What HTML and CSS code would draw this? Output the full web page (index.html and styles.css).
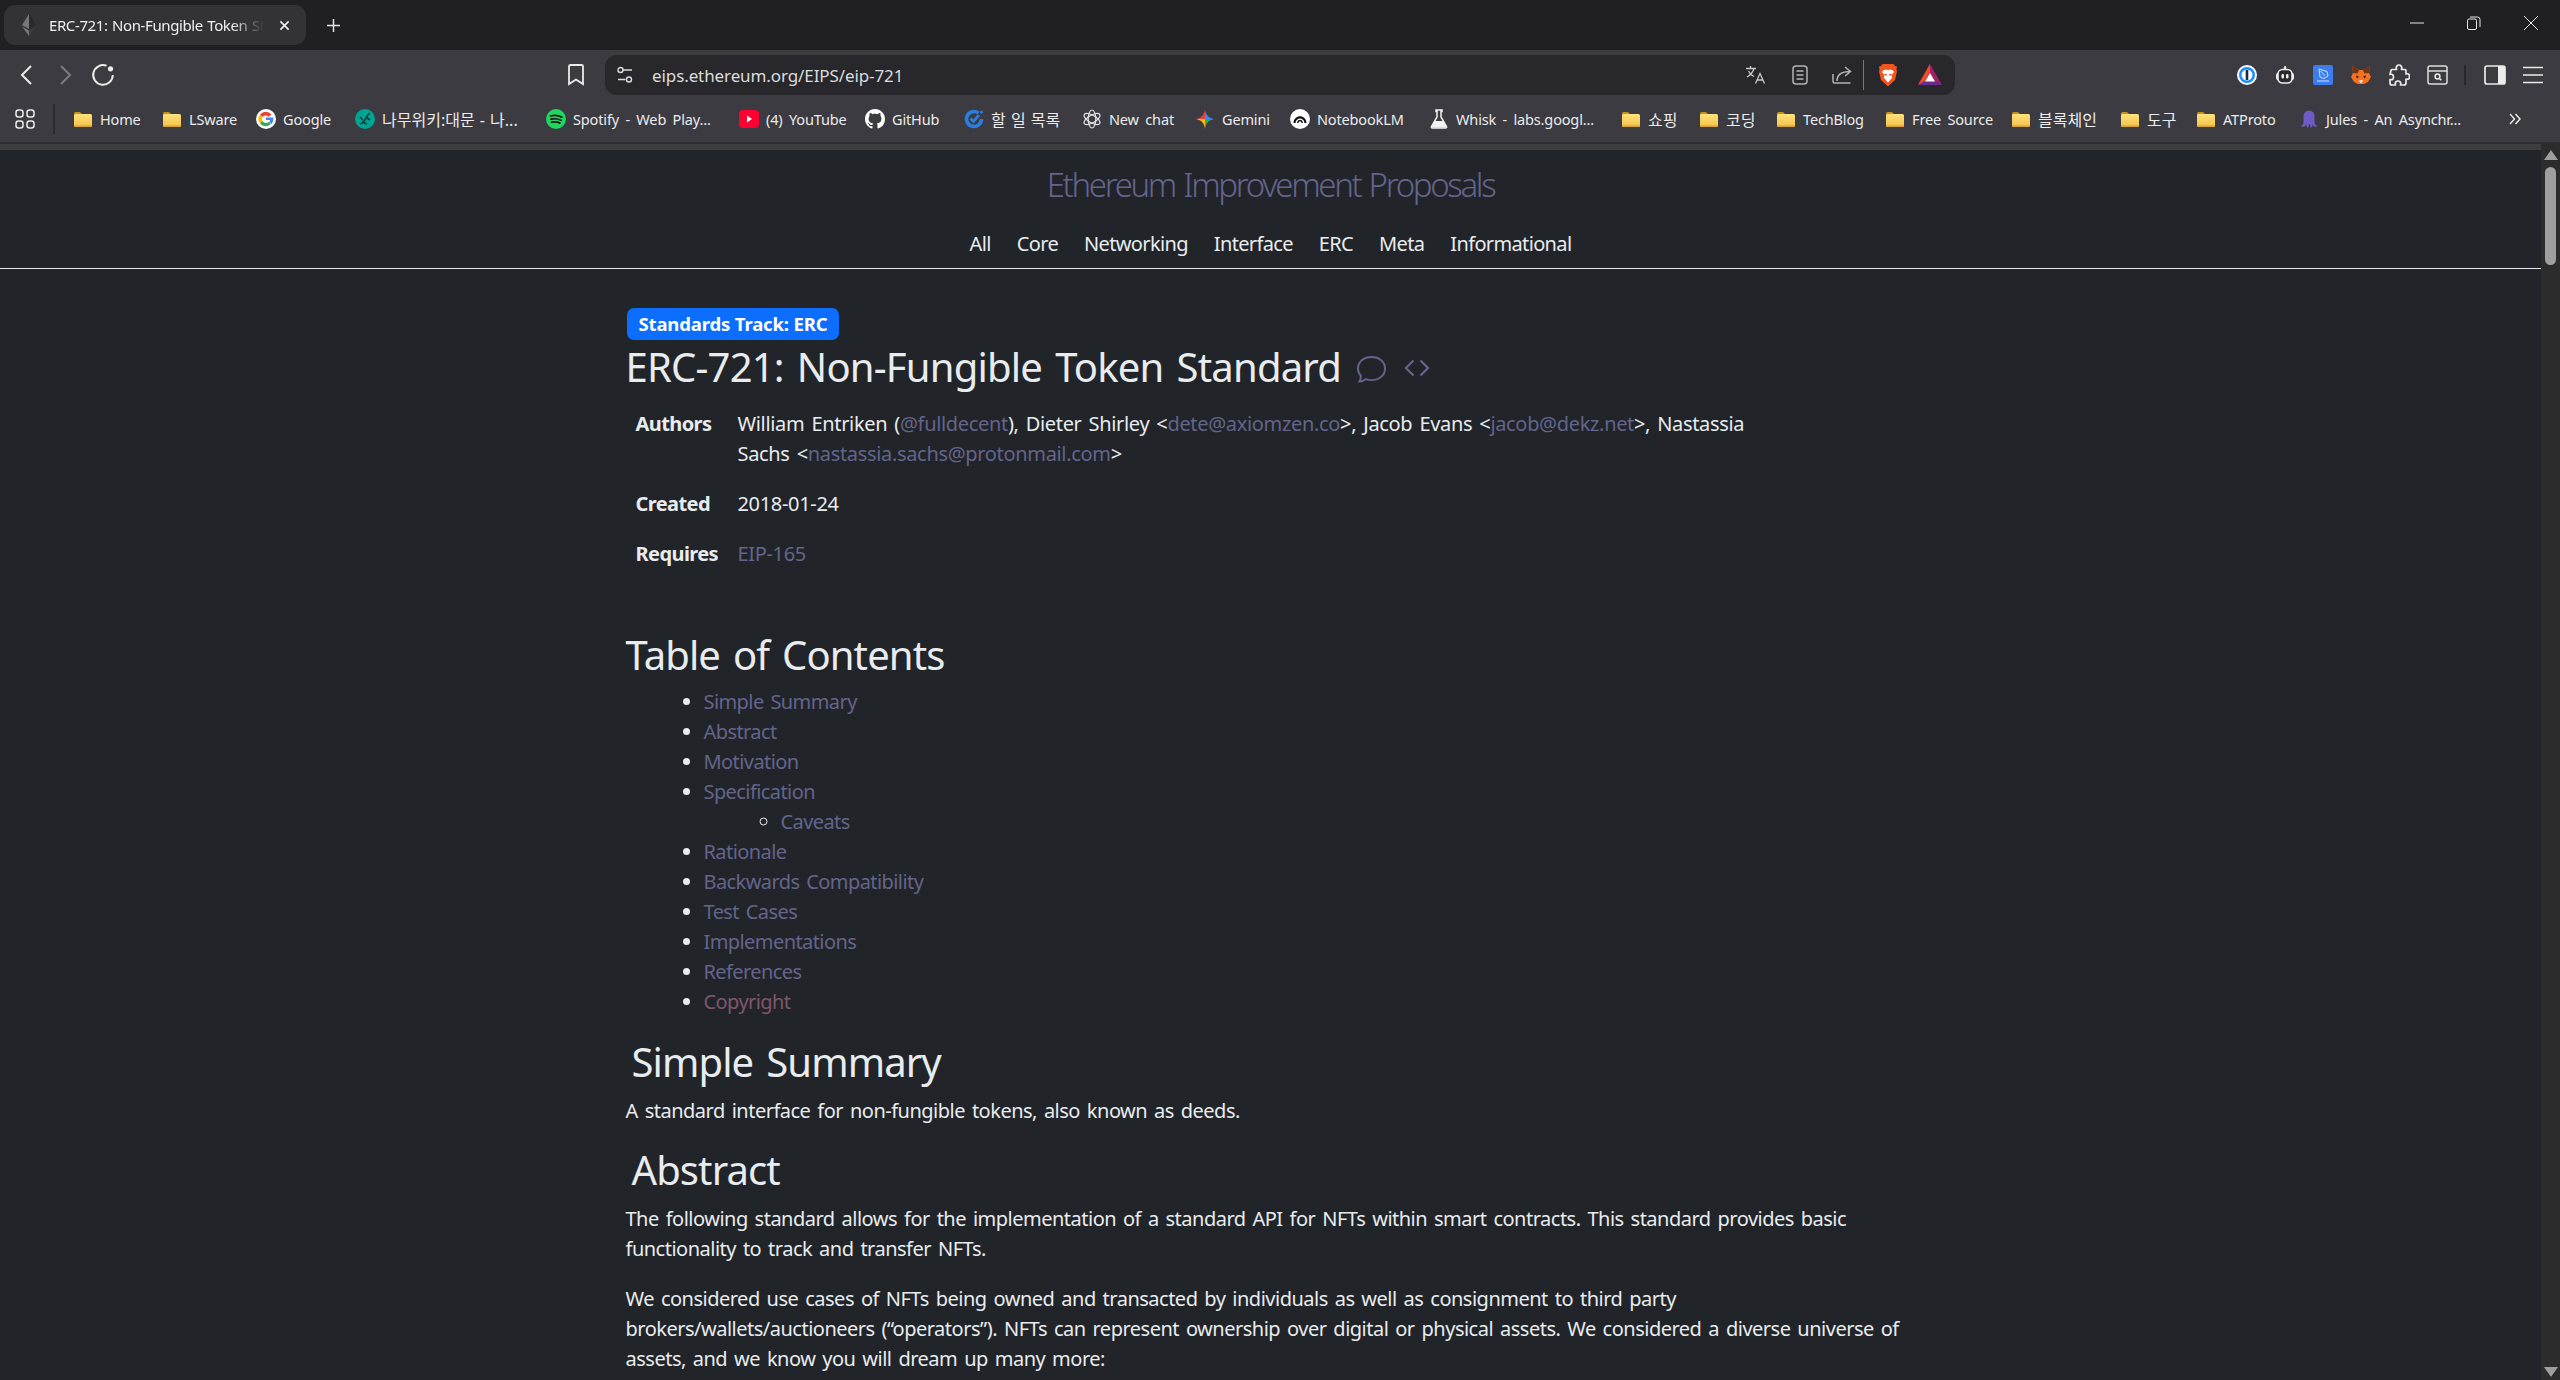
FILE: index.html
```html
<!DOCTYPE html>
<html lang="en">
<head>
<meta charset="utf-8">
<title>ERC-721: Non-Fungible Token Standard</title>
<link rel="stylesheet" href="styles.css">
</head>
<body>
<svg class="defs" width="0" height="0" aria-hidden="true">
  <defs>
    <linearGradient id="fg" x1="0" y1="0" x2="0" y2="1"><stop offset="0" stop-color="#ffe27a"/><stop offset="1" stop-color="#f2c14a"/></linearGradient>
    <symbol id="folder" viewBox="0 0 20 20">
      <path d="M1 4.500A1.500 1.500 0 0 1 2.500 3H7l2 2v3H1z" fill="#c98f17"/>
      <rect x="1" y="5" width="18" height="13" rx="1.500" fill="url(#fg)"/>
      <path d="M1 16.500V17a1 1 0 0 0 1 1h16a1 1 0 0 0 1-1v-.5z" fill="#d9a52f"/>
    </symbol>
  </defs>
</svg>

<header class="tabstrip">
  <div class="tab">
    <svg class="tab-fav" viewBox="0 0 14 22"><path d="M7 0 0 11l7 4z" fill="#77777b"/><path d="M7 0l7 11-7 4z" fill="#2a2a2d"/><path d="M0 12.500 7 22v-5.500z" fill="#77777b"/><path d="M14 12.500 7 22v-5.500z" fill="#3b3b3f"/></svg>
    <span class="tab-title">ERC-721: Non-Fungible Token Standard</span>
    <svg class="tab-close" viewBox="0 0 12 12"><path d="M1.500 1.500l9 9M10.500 1.500l-9 9" stroke="#f1f1f1" stroke-width="1.800" fill="none"/></svg>
  </div>
  <svg class="new-tab" viewBox="0 0 14 14"><path d="M7 0v14M0 7h14" stroke="#e6e6e6" stroke-width="1.600"/></svg>
  <div class="window-controls">
    <span class="win-btn"><svg viewBox="0 0 14 14" width="14" height="14"><path d="M0 7h14" stroke="#e6e6e6" stroke-width="1"/></svg></span>
    <span class="win-btn"><svg viewBox="0 0 14 14" width="14" height="14"><rect x=".5" y="3" width="9" height="10.500" rx="1.500" fill="none" stroke="#e6e6e6"/><path d="M3 1h7.500A2.500 2.500 0 0 1 13 3.500V11" fill="none" stroke="#e6e6e6"/></svg></span>
    <span class="win-btn"><svg viewBox="0 0 14 14" width="14" height="14"><path d="M0 0l14 14M14 0 0 14" stroke="#e6e6e6" stroke-width="1"/></svg></span>
  </div>
</header>

<nav class="toolbar">
  <span class="tool-btn"><svg viewBox="0 0 20 24" width="20" height="24"><path d="M14 3 5 12l9 9" fill="none" stroke="#ececec" stroke-width="2"/></svg></span>
  <span class="tool-btn"><svg viewBox="0 0 20 24" width="20" height="24"><path d="M6 3l9 9-9 9" fill="none" stroke="#7c7c80" stroke-width="2"/></svg></span>
  <span class="tool-btn"><svg viewBox="0 0 24 24" width="24" height="24"><path d="M15.500 2.800A9.800 9.800 0 1 0 21.800 12" fill="none" stroke="#ececec" stroke-width="2"/><circle cx="19.500" cy="5.800" r="2.600" fill="#ececec"/></svg></span>
  <span class="tool-btn bookmark-btn"><svg viewBox="0 0 18 22" width="18" height="22"><path d="M2 2.500A1.500 1.500 0 0 1 3.500 1h11A1.500 1.500 0 0 1 16 2.500V20l-7-4.500L2 20z" fill="none" stroke="#ececec" stroke-width="1.800"/></svg></span>
  <div class="omnibox">
    <svg class="tune" viewBox="0 0 18 18"><circle cx="4.500" cy="4" r="2.500" fill="none" stroke="#ddd" stroke-width="1.400"/><path d="M7 4h9M2 13.500h7.500" stroke="#ddd" stroke-width="1.400"/><circle cx="13" cy="13.500" r="2.500" fill="none" stroke="#ddd" stroke-width="1.400"/></svg>
    <span class="url">eips.ethereum.org/EIPS/eip-721</span>
    <span class="omni-btn omni-translate"><svg viewBox="0 0 20 18" width="20" height="18"><path d="M0 2.500h10M4.500 0v2.500M8 2.500c-1 3.500-3.500 6.500-7 8.500M2.500 5c1.200 2.500 3.500 4.500 5.500 5.500" fill="none" stroke="#c9c9c9" stroke-width="1.300"/><path d="M9.500 17.500l4.500-10 4.500 10M11 14h6" fill="none" stroke="#c9c9c9" stroke-width="1.300"/></svg></span>
    <span class="omni-btn"><svg viewBox="0 0 16 20" width="16" height="20"><rect x="1" y="1" width="14" height="18" rx="3" fill="none" stroke="#b4b4b4" stroke-width="1.500"/><path d="M4.500 6h7M4.500 10h7M4.500 14h7" stroke="#b4b4b4" stroke-width="1.500"/></svg></span>
    <span class="omni-btn"><svg viewBox="0 0 20 18" width="20" height="18"><path d="M1 8v7.500A1.500 1.500 0 0 0 2.500 17h16" fill="none" stroke="#b4b4b4" stroke-width="1.500"/><path d="M5 15c0-7 5-9.500 13-9.500M13 1l5.500 4.500L13 10" fill="none" stroke="#b4b4b4" stroke-width="1.500"/></svg></span>
    <i class="omni-sep"></i>
    <span class="omni-btn"><svg viewBox="0 0 20 24" width="20" height="24"><path d="M4.500 1h11l1.500 2 2 .5-.5 3 .5 2-2 8.500-7 6.500-7-6.500-2-8.500.5-2-.5-3 2-.5z" fill="#f1561f"/><path d="M5 7.500l3-1 2 .7 2-.7 3 1 1 1.500-2.500 3 .8 2.500-4.300 5-4.300-5 .8-2.500L4 9z" fill="#fff"/><path d="M6.500 10.500l2.500.7-.5 1.500-2-.5zM13.500 10.500l-2.500.7.5 1.500 2-.5z" fill="#f1561f"/></svg></span>
    <span class="omni-btn"><svg viewBox="0 0 24 22" width="24" height="22"><path d="M12 0 0 21h24z" fill="#9e1f63"/><path d="M12 0 0 21l6.500-3.500 5.500-9.500z" fill="#ef4d23"/><path d="M0 21h24l-6-3.500H6z" fill="#662d91"/><path d="M12 9l-5 8.500h10z" fill="#fff"/></svg></span>
  </div>
  <div class="extensions">
    <span class="tool-btn"><svg viewBox="0 0 20 20" width="20" height="20"><circle cx="10" cy="10" r="10" fill="#fff"/><circle cx="10" cy="10" r="8" fill="#1a8cff"/><circle cx="10" cy="10" r="5.500" fill="#fff"/><rect x="8.700" y="5" width="2.600" height="10" fill="#1a2a44"/></svg></span>
    <span class="tool-btn"><svg viewBox="0 0 20 18" width="20" height="18"><path d="M10 .5v3" stroke="#eee" stroke-width="1.500"/><circle cx="10" cy="1.500" r="1.300" fill="#eee"/><rect x="1" y="7" width="18" height="7" rx="2" fill="#eee"/><rect x="3" y="3.500" width="14" height="13.500" rx="4.500" fill="#2a2a2e" stroke="#eee" stroke-width="1.600"/><rect x="6.500" y="8" width="2.500" height="4.500" rx="1" fill="#eee"/><rect x="11" y="8" width="2.500" height="4.500" rx="1" fill="#eee"/></svg></span>
    <span class="tool-btn"><svg viewBox="0 0 20 20" width="20" height="20"><rect width="20" height="20" rx="2" fill="#3b7ded"/><path d="M6 4l8 2.500 1 4.500-4 2.500L7 12z" fill="none" stroke="#cfe0ff" stroke-width="1"/><path d="M7.500 6l4.500 5" stroke="#cfe0ff" stroke-width="1"/><path d="M4 16h12" stroke="#cfe0ff" stroke-width="1"/></svg></span>
    <span class="tool-btn"><svg viewBox="0 0 20 18" width="20" height="18"><path d="M1 0l7 4h4l7-4-1 7 2 4-3 5-4 2H7l-4-2-3-5 2-4z" fill="#f6701f"/><path d="M1 0l7 4-1.500 3.500L2 7zM19 0l-7 4 1.500 3.500L18 7z" fill="#6b3414"/><path d="M5 9.500l3 1-2 2zM15 9.500l-3 1 2 2z" fill="#2a1a10"/><path d="M8 14h4l-1 3H9z" fill="#e9d6c8"/></svg></span>
    <span class="tool-btn"><svg viewBox="0 0 21 22" width="21" height="22"><path d="M2 6.500A1 1 0 0 1 3 5.500h4.500c-1-3 1-4.500 2.500-4.500s3.500 1.500 2.500 4.500H16a1 1 0 0 1 1 1V10c3-1 3.500 1 3.500 2.500S20 16 17 15v4a2 2 0 0 1-2 2h-3.500c.8-3-1-4-2.500-4s-3.300 1-2.500 4H3a2 2 0 0 1-2-2v-3.500c3 .8 3.500-1 3.500-2.500S4 9.500 1 10.500z" fill="none" stroke="#ececec" stroke-width="1.700" stroke-linejoin="round"/></svg></span>
    <span class="tool-btn"><svg viewBox="0 0 21 20" width="21" height="20"><rect x="1" y="1" width="19" height="18" rx="2" fill="none" stroke="#dedede" stroke-width="1.500"/><path d="M1 6h19" stroke="#dedede" stroke-width="1.500"/><circle cx="10.500" cy="11.500" r="2.400" fill="none" stroke="#ececec" stroke-width="1.500"/><path d="M12.300 13.300l2 2" stroke="#ececec" stroke-width="1.500"/></svg></span>
    <i class="toolbar-sep"></i>
    <span class="tool-btn"><svg viewBox="0 0 22 20" width="22" height="20"><rect x="1" y="1" width="20" height="18" rx="2" fill="none" stroke="#ececec" stroke-width="1.700"/><rect x="14" y="1" width="7" height="18" fill="#ececec"/></svg></span>
    <span class="tool-btn"><svg viewBox="0 0 22 18" width="22" height="18"><path d="M1 1.500h20M1 9h20M1 16.500h20" stroke="#ececec" stroke-width="1.700"/></svg></span>
  </div>
</nav>

<nav class="bookmarks">
  <span class="apps"><svg viewBox="0 0 20 20" width="20" height="20"><g fill="none" stroke="#ececec" stroke-width="1.500"><rect x="1" y="1" width="7" height="7" rx="2.500"/><rect x="12" y="1" width="7" height="7" rx="2.500"/><rect x="1" y="12" width="7" height="7" rx="2.500"/><rect x="12" y="12" width="7" height="7" rx="2.500"/></g></svg></span>
  <i class="bm-sep"></i>
  <a class="bm"><svg class="bm-icon"><use href="#folder"/></svg><span>Home</span></a>
  <a class="bm"><svg class="bm-icon"><use href="#folder"/></svg><span>LSware</span></a>
  <a class="bm"><svg class="bm-icon" viewBox="0 0 20 20"><circle cx="10" cy="10" r="10" fill="#fff"/><path d="M15.500 5.500A7.500 7.500 0 0 0 4 5.500l2.500 2.500a4 4 0 0 1 6-.2z" fill="#ea4335"/><path d="M4 5.500a7.500 7.500 0 0 0 0 9L6.500 12a4 4 0 0 1 0-4z" fill="#fbbc05"/><path d="M4 14.500a7.500 7.500 0 0 0 11 .5l-2.500-2a4 4 0 0 1-6-1z" fill="#34a853"/><path d="M10 8.500h7.300c.3 2.500-.3 5-1.800 6.500L13 13c.7-.5 1-1.200 1.200-1.900H10z" fill="#4285f4"/></svg><span>Google</span></a>
  <a class="bm"><svg class="bm-icon" viewBox="0 0 20 20"><circle cx="10" cy="10" r="10" fill="#00a495"/><path d="M5 15c3-1 5-4 6-6s2-4 4-5M8 11 5 8M12 9l3 2M7 13l5 2" fill="none" stroke="#0c3b36" stroke-width="1.600"/></svg><span class="ko">나무위키:대문 - 나...</span></a>
  <a class="bm"><svg class="bm-icon" viewBox="0 0 20 20"><circle cx="10" cy="10" r="10" fill="#1ed760"/><path d="M4.500 7c4-1 8-.7 11.500 1.200M5 10.200c3.500-.8 7-.5 10 1.100M5.500 13.200c3-.6 6-.4 8.500 1" fill="none" stroke="#191414" stroke-width="1.700" stroke-linecap="round"/></svg><span>Spotify - Web Play...</span></a>
  <a class="bm"><svg class="bm-icon" viewBox="0 0 20 20"><rect y="1" width="20" height="18" rx="4" fill="#ff0033"/><path d="M8 6.500l5 3.500-5 3.500z" fill="#fff"/></svg><span>(4) YouTube</span></a>
  <a class="bm"><svg class="bm-icon" viewBox="0 0 16 16"><path fill="#fff" d="M8 0C3.580 0 0 3.580 0 8c0 3.540 2.290 6.530 5.470 7.590.4.070.55-.17.55-.38 0-.19-.01-.82-.01-1.490-2.010.37-2.530-.49-2.690-.94-.09-.23-.48-.94-.82-1.130-.28-.15-.68-.52-.01-.53.630-.01 1.080.58 1.230.82.720 1.210 1.870.87 2.330.66.070-.52.280-.87.510-1.070-1.780-.2-3.640-.89-3.640-3.950 0-.87.310-1.590.820-2.150-.08-.2-.36-1.020.08-2.120 0 0 .67-.21 2.200.82.640-.18 1.320-.27 2-.27s1.360.09 2 .27c1.530-1.040 2.200-.82 2.200-.82.440 1.100.16 1.920.08 2.120.51.560.82 1.270.82 2.150 0 3.070-1.870 3.750-3.650 3.950.29.250.54.730.54 1.480 0 1.070-.01 1.930-.01 2.200 0 .21.150.46.550.38A8.010 8.010 0 0 0 16 8c0-4.420-3.580-8-8-8z"/></svg><span>GitHub</span></a>
  <a class="bm"><svg class="bm-icon" viewBox="0 0 20 20"><path d="M14.500 4A7.500 7.500 0 1 0 17.500 10" fill="none" stroke="#2a7de1" stroke-width="3.600"/><path d="M6.500 9.500l3 3 5.500-6.500" fill="none" stroke="#2a7de1" stroke-width="2.800"/><circle cx="17.500" cy="3" r="1.600" fill="#2a7de1"/></svg><span class="ko">할 일 목록</span></a>
  <a class="bm"><svg class="bm-icon" viewBox="0 0 20 20"><g fill="none" stroke="#e4e4e4" stroke-width="1.200"><ellipse cx="10" cy="10" rx="3.800" ry="9"/><ellipse cx="10" cy="10" rx="3.800" ry="9" transform="rotate(60 10 10)"/><ellipse cx="10" cy="10" rx="3.800" ry="9" transform="rotate(120 10 10)"/></g></svg><span>New chat</span></a>
  <a class="bm"><svg class="bm-icon" viewBox="0 0 20 20"><path d="M10 0C10.500 5.500 13.500 9.200 19 10c-5.500.8-8.500 4.500-9 10z" fill="#4285f4"/><path d="M10 0C9.500 5.500 6.500 9.200 1 10h9z" fill="#ea4335"/><path d="M1 10c5.500.8 8.500 4.500 9 10V10z" fill="#fbbc05"/><path d="M10 20c.5-5.500 3.500-9.200 9-10h-9z" fill="#34a853"/></svg><span>Gemini</span></a>
  <a class="bm"><svg class="bm-icon" viewBox="0 0 20 20"><circle cx="10" cy="10" r="10" fill="#fff"/><path d="M3.500 14c.5-9 12.500-9 13 0h-2c-.5-6-8.500-6-9 0zM7 14c.3-4.500 5.700-4.500 6 0h-1.500c-.3-2.500-2.700-2.500-3 0z" fill="#111"/></svg><span>NotebookLM</span></a>
  <a class="bm"><svg class="bm-icon" viewBox="0 0 20 20"><path d="M7 1h6v1.500h-1v5.500l5.500 9.500c.4.800 0 1.500-1 1.500h-13c-1 0-1.400-.7-1-1.500L8 8V2.500H7z" fill="none" stroke="#f2f2f2" stroke-width="1.500"/><path d="M5.500 12h9l3 6.500h-15z" fill="#f2f2f2"/></svg><span>Whisk - labs.googl...</span></a>
  <a class="bm"><svg class="bm-icon"><use href="#folder"/></svg><span class="ko">쇼핑</span></a>
  <a class="bm"><svg class="bm-icon"><use href="#folder"/></svg><span class="ko">코딩</span></a>
  <a class="bm"><svg class="bm-icon"><use href="#folder"/></svg><span>TechBlog</span></a>
  <a class="bm"><svg class="bm-icon"><use href="#folder"/></svg><span>Free Source</span></a>
  <a class="bm"><svg class="bm-icon"><use href="#folder"/></svg><span class="ko">블록체인</span></a>
  <a class="bm"><svg class="bm-icon"><use href="#folder"/></svg><span class="ko">도구</span></a>
  <a class="bm"><svg class="bm-icon"><use href="#folder"/></svg><span>ATProto</span></a>
  <a class="bm"><svg class="bm-icon" viewBox="0 0 20 20"><path d="M4.500 7a5.500 5.500 0 0 1 11 0v5c0 3 1 5 3 4-.5 2.500-4 2.500-5-.5l-.5 2.500c-.4 1-1.300 1-1.500 0l-.5-2.500h-1l-.5 2.500c-.2 1-1.100 1-1.500 0L7 15.500c-1 3-4.500 3-5 .5 2 1 2.500-1 2.500-4z" fill="#6e5bc4"/></svg><span>Jules - An Asynchr...</span></a>
  <span class="bm-more"><svg viewBox="0 0 12 12" width="12" height="12"><path d="M1 1l4.500 5L1 11M6.500 1 11 6l-4.500 5" fill="none" stroke="#ececec" stroke-width="1.400"/></svg></span>
</nav>

<div class="viewport">
  <div class="page">
    <div class="infobar-edge"></div>
    <header class="site-header">
      <h3 class="site-title">Ethereum Improvement Proposals</h3>
      <ul class="site-nav">
        <li>All</li><li>Core</li><li>Networking</li><li>Interface</li><li>ERC</li><li>Meta</li><li>Informational</li>
      </ul>
    </header>
    <main class="container">
      <span class="badge">Standards Track: ERC</span>
      <h1 class="title"><span>ERC-721: Non-Fungible Token Standard</span><svg class="title-icon chat" viewBox="0 0 32 30"><path d="M16 2C8 2 2 7 2 14c0 3 1 5.500 3 7.500 0 2.500-.5 4.500-1.500 6 3 0 5-1 6.500-2.500 2 .7 4 1 6 1 8 0 14-5 14-12S24 2 16 2z" fill="none" stroke="#64648c" stroke-width="2"/></svg><svg class="title-icon code" viewBox="0 0 26 18"><path d="M9.500 1.500 2 9l7.500 7.500M16.500 1.500 24 9l-7.500 7.500" fill="none" stroke="#64648c" stroke-width="2.200"/></svg></h1>
      <dl class="meta">
        <dt>Authors</dt>
        <dd>William Entriken (<a>@fulldecent</a>), Dieter Shirley &lt;<a>dete@axiomzen.co</a>&gt;, Jacob Evans &lt;<a>jacob@dekz.net</a>&gt;, Nastassia Sachs &lt;<a>nastassia.sachs@protonmail.com</a>&gt;</dd>
        <dt>Created</dt>
        <dd>2018-01-24</dd>
        <dt>Requires</dt>
        <dd><a>EIP-165</a></dd>
      </dl>
      <h2 class="toc-heading">Table of Contents</h2>
      <ul class="toc">
        <li><a>Simple Summary</a></li>
        <li><a>Abstract</a></li>
        <li><a>Motivation</a></li>
        <li><a>Specification</a>
          <ul><li><a>Caveats</a></li></ul>
        </li>
        <li><a>Rationale</a></li>
        <li><a>Backwards Compatibility</a></li>
        <li><a>Test Cases</a></li>
        <li><a>Implementations</a></li>
        <li><a>References</a></li>
        <li><a class="visited">Copyright</a></li>
      </ul>
      <h2 class="section">Simple Summary</h2>
      <p>A standard interface for non-fungible tokens, also known as deeds.</p>
      <h2 class="section">Abstract</h2>
      <p>The following standard allows for the implementation of a standard API for NFTs within smart contracts. This standard provides basic functionality to track and transfer NFTs.</p>
      <p>We considered use cases of NFTs being owned and transacted by individuals as well as consignment to third party brokers/wallets/auctioneers (“operators”). NFTs can represent ownership over digital or physical assets. We considered a diverse universe of assets, and we know you will dream up many more:</p>
    </main>
  </div>
  <aside class="scrollbar">
    <svg class="sb-arrow" viewBox="0 0 14 10" width="14" height="10"><path d="M7 0l7 10H0z" fill="#9f9f9f"/></svg>
    <div class="sb-thumb"></div>
    <svg class="sb-arrow sb-down" viewBox="0 0 14 10" width="14" height="10"><path d="M7 10l7-10H0z" fill="#9f9f9f"/></svg>
  </aside>
</div>
</body>
</html>
```
FILE: styles.css
```css
* { box-sizing: border-box; }
html, body { margin: 0; padding: 0; }
body {
  width: 2560px; height: 1380px; overflow: hidden;
  display: flex; flex-direction: column;
  background: #212529; color: #e9ecef;
  font-family: "Noto Sans", "Noto Sans CJK KR", sans-serif;
}
.defs { position: absolute; }

.tabstrip { height: 50px; flex: none; display: flex; align-items: flex-start; background: #202024; }
.tab {
  width: 302px; height: 40px; margin: 5px 0 0 4px; padding: 0 12px 0 18px;
  display: flex; align-items: center; background: #323237; border-radius: 11px;
}
.tab-fav { width: 14px; height: 22px; flex: none; }
.tab-title {
  width: 215px; margin-left: 13px; white-space: nowrap; overflow: hidden;
  font-size: 15px; letter-spacing: -.4px; word-spacing: 1px; color: #f0f0f0;
  -webkit-mask-image: linear-gradient(90deg, #000 85%, transparent 100%);
  mask-image: linear-gradient(90deg, #000 85%, transparent 100%);
}
.tab-close { width: 11px; height: 11px; margin-left: 15px; flex: none; }
.new-tab { width: 13px; height: 13px; margin: 19px 0 0 21px; }
.window-controls { margin-left: auto; padding-right: 1px; display: flex; }
.win-btn { width: 57px; height: 46px; display: flex; align-items: center; justify-content: center; }

.toolbar { height: 45px; flex: none; display: flex; align-items: center; padding: 5px 8px 0 8px; background: #3b3b41; }
.tool-btn { width: 38px; height: 40px; flex: none; display: flex; align-items: center; justify-content: center; }
.bookmark-btn { margin-left: 435px; }
.omnibox {
  width: 1350px; height: 40px; margin-left: 10px; padding: 0 4px 0 11px;
  display: flex; align-items: center; background: #27272c; border-radius: 12px;
}
.tune { width: 18px; height: 18px; flex: none; }
.url { margin-left: 18px; margin-right: auto; font-size: 17px; letter-spacing: -.1px; color: #dcdcdc; }
.omni-btn { width: 42px; height: 40px; flex: none; display: flex; align-items: center; justify-content: center; }
.omni-translate { margin-right: 2px; }
.omni-sep { width: 1px; height: 30px; margin-right: 3px; background: #77777c; flex: none; }
.extensions { margin-left: auto; display: flex; align-items: center; }
.toolbar-sep { width: 2px; height: 20px; margin: 0 10px 0 8px; background: #28282c; }

.bookmarks {
  height: 49px; flex: none; align-items: center;
  display: grid;
  grid-template-columns: 53px 20px 89px 94px 99px 191px 193px 126px 99px 118px 113px 95px 139px 192px 78px 77px 109px 126px 109px 76px 103px 210px 1fr;
  background: #3b3b41; border-bottom: 2px solid #2b2b30;
}
.apps { padding-left: 15px; display: flex; }
.bm-sep { width: 2px; height: 30px; background: #2b2b30; }
.bm { display: flex; align-items: center; gap: 7px; min-width: 0; white-space: nowrap; font-size: 14.5px; letter-spacing: -.15px; word-spacing: 2.800px; color: #ececec; }
.bm .ko { font-size: 16px; letter-spacing: 0; word-spacing: 1px; }
.bm-icon { width: 20px; height: 20px; flex: none; }
.bm-more { display: flex; }

.viewport { flex: 1; min-height: 0; display: flex; }
.page { flex: 1; min-width: 0; overflow: hidden; background: #212529; }
.infobar-edge { height: 6px; background: #3d3d3d; }
.scrollbar { width: 19px; flex: none; display: flex; flex-direction: column; align-items: center; background: #2c2c2c; padding: 6px 0 3px; }
.sb-thumb { width: 11px; height: 98px; margin-top: 7px; border-radius: 6px; background: #9f9f9f; }
.sb-down { margin-top: auto; }

.site-header { text-align: center; padding-top: 10px; border-bottom: 1px solid #e9ecef; height: 119px; }
.site-title { margin: 0; font-size: 33px; line-height: 50px; font-weight: 300; letter-spacing: -2.350px; word-spacing: 2px; color: #64648c; font-family: "Noto Sans", sans-serif; }
.site-nav { list-style: none; margin: 19px 0 0; padding: 0; display: flex; justify-content: center; gap: 26px; font-size: 20px; line-height: 30px; letter-spacing: -.65px; color: #e9ecef; }

.container { width: 1290px; margin: 0 auto; padding-top: 39px; font-size: 20px; line-height: 30px; letter-spacing: -.58px; word-spacing: 2.200px; }
.container a { color: #64648c; }
.container a.visited { color: #805570; }
.badge { display: block; width: 212px; height: 32px; margin-left: 1px; padding-left: 12px; border-radius: 7px; background: #0d6efd; color: #fff; font-size: 18.500px; font-weight: 700; line-height: 31px; letter-spacing: -.15px; word-spacing: 0; white-space: nowrap; }
.title { margin: 3px 0 0 0; font-size: 40px; line-height: 48px; font-weight: 400; letter-spacing: -.8px; word-spacing: 3.500px; color: #e9ecef; display: flex; align-items: center; }
.title-icon { flex: none; }
.title-icon.chat { width: 31px; height: 29px; margin: 4px 0 0 15px; }
.title-icon.code { width: 26px; height: 18px; margin: 2px 0 0 17px; }

.meta { display: grid; grid-template-columns: 102px 1040px; margin: 8px 0 0 10px; }
.meta dt { padding: 10px 0; font-weight: 700; color: #e9ecef; }
.meta dd { margin: 0; padding: 10px 0; letter-spacing: -.33px; }

.toc-heading, .section { margin: 52px 0 0 0; font-size: 40px; line-height: 48px; font-weight: 400; letter-spacing: -.9px; word-spacing: 3.500px; color: #e9ecef; }
.section { margin: 20px 0 0 6px; }
.toc { margin: 8px 0 0; padding-left: 78px; }
.toc ul { margin: 0; padding-left: 77px; list-style-type: circle; }
.toc + .section { margin-top: 21px; }
.container p { margin: 10px 0 0; letter-spacing: -.5px; }
.container p + p { margin-top: 20px; }
```
